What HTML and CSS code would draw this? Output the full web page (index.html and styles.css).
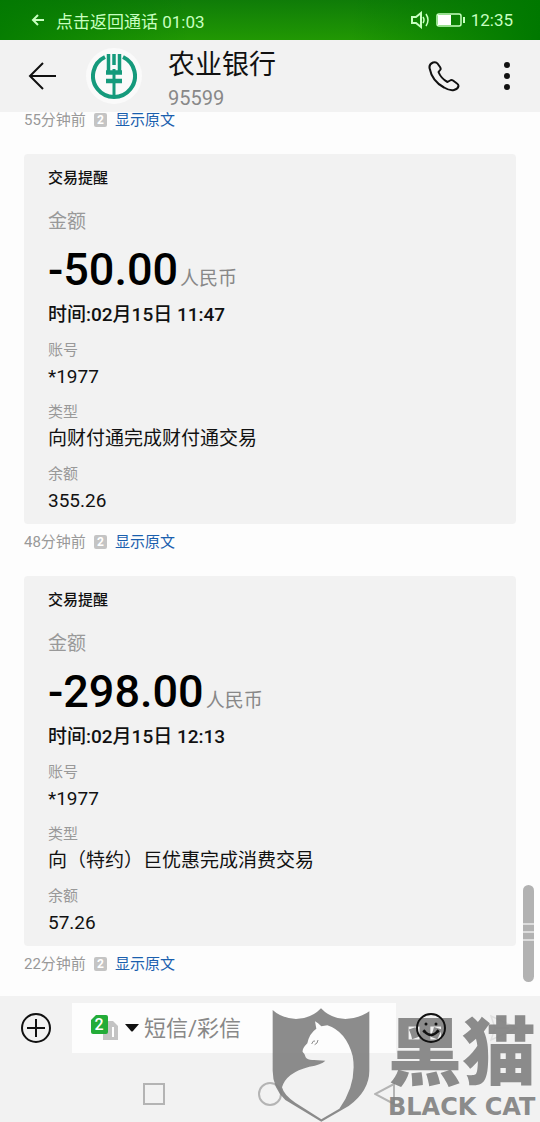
FILE: index.html
```
<!DOCTYPE html>
<html lang="zh-CN">
<head>
  <meta charset="UTF-8">
  <meta name="viewport" content="width=device-width, initial-scale=1">
  <title>农业银行</title>
  <link rel="stylesheet" href="styles.css">
</head>
<body>
  <!-- Status bar -->
  <div class="status-bar">
    <button class="return-call">
      <svg width="14" height="14" viewBox="0 0 14 14" fill="none" stroke="currentColor" stroke-width="2"><path d="M13 7H2M7 2L2 7l5 5"/></svg>
      点击返回通话 01:03
    </button>
    <div class="status-icons">
      <svg width="19" height="18" viewBox="0 0 19 18" fill="none" stroke="currentColor" stroke-width="2"><path d="M1 6h4l5-4v14l-5-4H1z"/><path d="M12 6q2 3 0 6M15 3q4 6 0 12" stroke-width="1.5"/></svg>
      <svg width="29" height="14" viewBox="0 0 29 14"><rect x="1" y="1" width="24" height="12" rx="2" fill="none" stroke="currentColor" stroke-width="1.5"/><rect x="2" y="2" width="13" height="10" fill="#fff"/><path d="M28 4v6" stroke="currentColor" stroke-width="2"/></svg>
      <span>12:35</span>
    </div>
  </div>

  <!-- Contact header -->
  <header class="header">
    <button class="icon-button" aria-label="返回">
      <svg width="28" height="28" viewBox="0 0 28 28" fill="none" stroke="currentColor" stroke-width="2"><path d="M28 14H2M15 1L2 14l13 13"/></svg>
    </button>
    <div class="avatar">
      <svg width="46" height="46" viewBox="0 0 46 46" fill="none" stroke="#159a7c">
        <path d="M14 4A21 21 0 1 0 32 4" stroke-width="4"/>
        <path d="M17.500 1v17M28.500 1v17" stroke-width="3.500"/>
        <path d="M23 1v11" stroke-width="3.500"/>
        <path d="M15 19.500h7M24 19.500h7M15 28h7M24 28h7" stroke-width="4.500"/>
        <path d="M23 16v28" stroke-width="3"/>
      </svg>
    </div>
    <div class="contact">
      <h1 class="contact-name">农业银行</h1>
      <div class="contact-number">95599</div>
    </div>
    <div class="header-actions">
      <button class="icon-button" aria-label="拨打电话">
        <svg width="32" height="32" viewBox="0 0 32 32" fill="none" stroke="currentColor" stroke-width="2" stroke-linejoin="round"><path d="M5 2.500Q1 4 1.500 8Q4 21 16 27.500Q22 31 26 30Q30 29 30.500 26Q30.500 24.500 29 23.500L25 20.500Q23.500 19.500 22 20.500L19.500 22Q13 18.500 10.500 12L12.500 9.500Q13 8.500 12 7L9.500 3.500Q8 1.500 5 2.500Z"/></svg>
      </button>
      <button class="icon-button" aria-label="更多">
        <svg width="6" height="28" viewBox="0 0 6 28" fill="currentColor"><circle cx="3" cy="3" r="3"/><circle cx="3" cy="14" r="3"/><circle cx="3" cy="25" r="3"/></svg>
      </button>
    </div>
  </header>

  <!-- Messages -->
  <main class="thread">
    <div class="meta">
      <span>55分钟前</span>
      <span class="sim-tag">2</span>
      <a href="#">显示原文</a>
    </div>

    <article class="card">
      <h2 class="card-title">交易提醒</h2>
      <div class="amount-label">金额</div>
      <div class="amount">-50.00<span class="unit">人民币</span></div>
      <div class="time">时间:02月15日 11:47</div>
      <dl class="details">
        <div><dt>账号</dt><dd>*1977</dd></div>
        <div><dt>类型</dt><dd>向财付通完成财付通交易</dd></div>
        <div><dt>余额</dt><dd>355.26</dd></div>
      </dl>
    </article>
    <div class="meta">
      <span>48分钟前</span>
      <span class="sim-tag">2</span>
      <a href="#">显示原文</a>
    </div>

    <article class="card">
      <h2 class="card-title">交易提醒</h2>
      <div class="amount-label">金额</div>
      <div class="amount">-298.00<span class="unit">人民币</span></div>
      <div class="time">时间:02月15日 12:13</div>
      <dl class="details">
        <div><dt>账号</dt><dd>*1977</dd></div>
        <div><dt>类型</dt><dd>向（特约）巨优惠完成消费交易</dd></div>
        <div><dt>余额</dt><dd>57.26</dd></div>
      </dl>
    </article>
    <div class="meta">
      <span>22分钟前</span>
      <span class="sim-tag">2</span>
      <a href="#">显示原文</a>
    </div>
    <div class="scroll-thumb"></div>
  </main>

  <!-- Compose + navigation -->
  <footer class="footer">
    <div class="compose">
      <button class="icon-button" aria-label="添加">
        <svg width="32" height="32" viewBox="0 0 32 32" fill="none" stroke="currentColor" stroke-width="2"><circle cx="16" cy="16" r="14"/><path d="M16 7v18M7 16h18"/></svg>
      </button>
      <div class="compose-box">
        <button class="sim-switch" aria-label="选择卡">
          <svg width="28" height="26" viewBox="0 0 28 26">
            <path d="M12 6h10l5 5v14H12z" fill="#c4c4c4"/>
            <path d="M22 12v10" stroke="#fff" stroke-width="2"/>
            <path d="M5 0h10q2 0 2 2v15q0 2-2 2H2q-2 0-2-2V5z" fill="#23ac38"/>
            <text x="8" y="15" class="sim-digit">2</text>
          </svg>
          <svg width="14" height="8" viewBox="0 0 14 8"><path d="M0 0h14L8 7q-1 1-2 0z" fill="#111"/></svg>
        </button>
        <input class="compose-input" type="text" placeholder="短信/彩信" aria-label="短信/彩信">
      </div>
      <button class="icon-button emoji" aria-label="表情">
        <svg width="30" height="30" viewBox="0 0 30 30" fill="none" stroke="currentColor" stroke-width="2"><circle cx="15" cy="15" r="14"/><path d="M8 18q7 8 14 0" stroke-width="2.500"/><path d="M7 19l2-2M23 19l-2-2"/><circle cx="10" cy="11" r="1.500" fill="currentColor" stroke="none"/><circle cx="20" cy="11" r="1.500" fill="currentColor" stroke="none"/></svg>
      </button>
      <button class="icon-button send" aria-label="发送">
        <svg width="28" height="28" viewBox="0 0 28 28" fill="none" stroke="currentColor" stroke-width="1.500"><path d="M1 2l26 12L1 26l4-12zM5 14h14"/></svg>
      </button>
    </div>
    <nav class="nav">
      <button class="icon-button" aria-label="最近任务"><svg width="24" height="24" viewBox="0 0 24 24"><rect x="2" y="2" width="20" height="20"/></svg></button>
      <button class="icon-button" aria-label="主屏幕"><svg width="24" height="24" viewBox="0 0 24 24"><circle cx="12" cy="12" r="11"/></svg></button>
      <button class="icon-button" aria-label="后退"><svg width="24" height="24" viewBox="0 0 24 24"><path d="M20 2v20L1 12z"/></svg></button>
    </nav>
  </footer>

  <!-- Watermark -->
  <div class="watermark">
    <svg width="98" height="114" viewBox="20 22 294 342">
      <path fill="currentColor" fill-rule="evenodd" d="M22 28Q48 52 92 55Q138 54 167 23Q196 54 240 55Q284 53 312 32V210Q312 270 250 316L168 363L60 298Q22 262 22 210Z
        M149 62L153 84Q132 98 126 128Q110 144 112 154Q118 158 121 170Q128 180 146 178L180 180Q168 192 132 198Q62 216 50 260Q56 284 90 306L168 356L222 324Q276 248 262 166Q242 92 186 74L168 77Q158 66 149 62Z"/>
      <path d="M139 130q4-12 10-9M148 132q9-3 10-14" fill="none" stroke="currentColor" stroke-width="3"/>
    </svg>
    <div class="watermark-text">
      <div class="watermark-name">黑猫</div>
      <div class="watermark-latin">BLACK CAT</div>
    </div>
  </div>
</body>
</html>
```
FILE: styles.css
```
* {
  box-sizing: border-box;
}

body {
  margin: 0;
  height: 100vh;
  display: flex;
  flex-direction: column;
  position: relative;
  background: #fdfdfd;
  color: #111;
  font-family: Roboto, "Noto Sans CJK SC", sans-serif;
}

button {
  padding: 0;
  border: 0;
  background: none;
  color: inherit;
  font: inherit;
}

svg {
  display: block;
}

.icon-button {
  flex: none;
}

/* Status bar */
.status-bar {
  flex: none;
  height: 40px;
  padding: 0 27px 0 31px;
  display: flex;
  align-items: center;
  justify-content: space-between;
  background: linear-gradient(90deg, rgba(0, 120, 0, 0.8), rgba(0, 120, 0, 0) 35%, rgba(0, 120, 0, 0) 65%, #007800), linear-gradient(#0f7c08, #219803);
  color: #c8ffc0;
  font-size: 17px;
}

.return-call {
  display: flex;
  align-items: center;
  gap: 11px;
}

.status-icons {
  display: flex;
  align-items: center;
  gap: 6px;
}

/* Contact header */
.header {
  flex: none;
  height: 72px;
  padding: 0 30px 0 28px;
  display: flex;
  align-items: center;
  background: #f2f2f2;
}

.avatar {
  width: 56px;
  height: 56px;
  margin: 0 26px 0 30px;
  display: flex;
  align-items: center;
  justify-content: center;
  border-radius: 50%;
  background: #fafafa;
}

.contact {
  flex: 1;
  padding-top: 4px;
}

.contact-name {
  margin: 0;
  font-size: 27px;
  font-weight: 400;
  line-height: 40px;
}

.contact-number {
  color: #888;
  font-size: 20px;
  line-height: 26px;
}

.header-actions {
  display: flex;
  align-items: center;
  gap: 44px;
}

/* Messages */
.thread {
  flex: 1;
  min-height: 0;
  position: relative;
  padding: 0 24px 22px;
  display: flex;
  flex-direction: column;
  justify-content: flex-end;
  overflow: hidden;
}

.meta {
  display: flex;
  align-items: center;
  gap: 8px;
  color: #999;
  font-size: 15px;
  line-height: 20px;
}

.meta a {
  color: #1a5fae;
  text-decoration: none;
}

.sim-tag {
  width: 13px;
  height: 14px;
  border-radius: 2px;
  background: #c4c4c4;
  color: #fff;
  font-size: 12px;
  font-weight: 700;
  line-height: 14px;
  text-align: center;
}

.card {
  margin: 24px 0 8px;
  padding: 14px 24px 6px;
  border-radius: 4px;
  background: #f2f2f2;
}

.card-title {
  margin: 0;
  font-size: 15px;
  font-weight: 500;
  line-height: 20px;
}

.amount-label {
  margin-top: 22px;
  color: #999;
  font-size: 19px;
  line-height: 24px;
}

.amount {
  margin-top: 12px;
  color: #000;
  font-size: 45px;
  font-weight: 500;
  line-height: 48px;
}

.unit {
  margin-left: 2px;
  color: #888;
  font-size: 19px;
  font-weight: 400;
  line-height: 24px;
}

.time {
  margin-top: 8px;
  font-size: 19px;
  font-weight: 500;
  line-height: 26px;
}

.details {
  margin: 12px 0 0;
  display: flex;
  flex-direction: column;
  gap: 8px;
}

.details dt {
  color: #999;
  font-size: 15px;
  line-height: 20px;
}

.details dd {
  margin: 0;
  font-size: 19px;
  line-height: 34px;
}

.scroll-thumb {
  position: absolute;
  right: 6px;
  bottom: 14px;
  width: 11px;
  height: 97px;
  border-radius: 6px;
  background: linear-gradient(transparent 38px, #ddd 38px 40px, transparent 40px 46px, #ddd 46px 48px, transparent 48px 54px, #ddd 54px 56px, transparent 56px), #b2b2b2;
}

/* Compose + navigation */
.footer {
  flex: none;
  background: #f2f2f2;
}

.compose {
  padding: 7px 22px 13px 20px;
  display: flex;
  align-items: center;
}

.compose-box {
  flex: 1;
  min-width: 0;
  height: 50px;
  margin: 0 20px;
  padding-left: 19px;
  display: flex;
  align-items: center;
  background: #fdfdfd;
}

.sim-switch {
  display: flex;
  align-items: center;
  gap: 6px;
}

.sim-digit {
  fill: #fff;
  font-size: 16px;
  font-weight: 500;
  text-anchor: middle;
}

.compose-input {
  flex: 1;
  min-width: 0;
  padding: 0 0 0 5px;
  border: 0;
  outline: 0;
  background: none;
  font: inherit;
  font-size: 22px;
}

.compose-input::placeholder {
  color: #888;
}

.emoji {
  position: relative;
  z-index: 2;
}

.send {
  margin-left: 44px;
  color: #e0e0e0;
}

.nav {
  height: 56px;
  display: flex;
  align-items: center;
  justify-content: center;
  gap: 92px;
}

.nav svg {
  fill: none;
  stroke: #b4b4b4;
  stroke-width: 2;
}

/* Watermark */
.watermark {
  position: absolute;
  right: 4px;
  bottom: 0;
  z-index: 1;
  display: flex;
  align-items: flex-end;
  gap: 18px;
  color: #808080;
  opacity: 0.9;
  pointer-events: none;
}

.watermark-name {
  margin-bottom: 8px;
  font-family: "Noto Sans CJK SC", sans-serif;
  font-size: 74px;
  font-weight: 900;
  line-height: 74px;
}

.watermark-latin {
  font-family: "DejaVu Sans", sans-serif;
  font-size: 24px;
  font-weight: 700;
  line-height: 30px;
}
```
